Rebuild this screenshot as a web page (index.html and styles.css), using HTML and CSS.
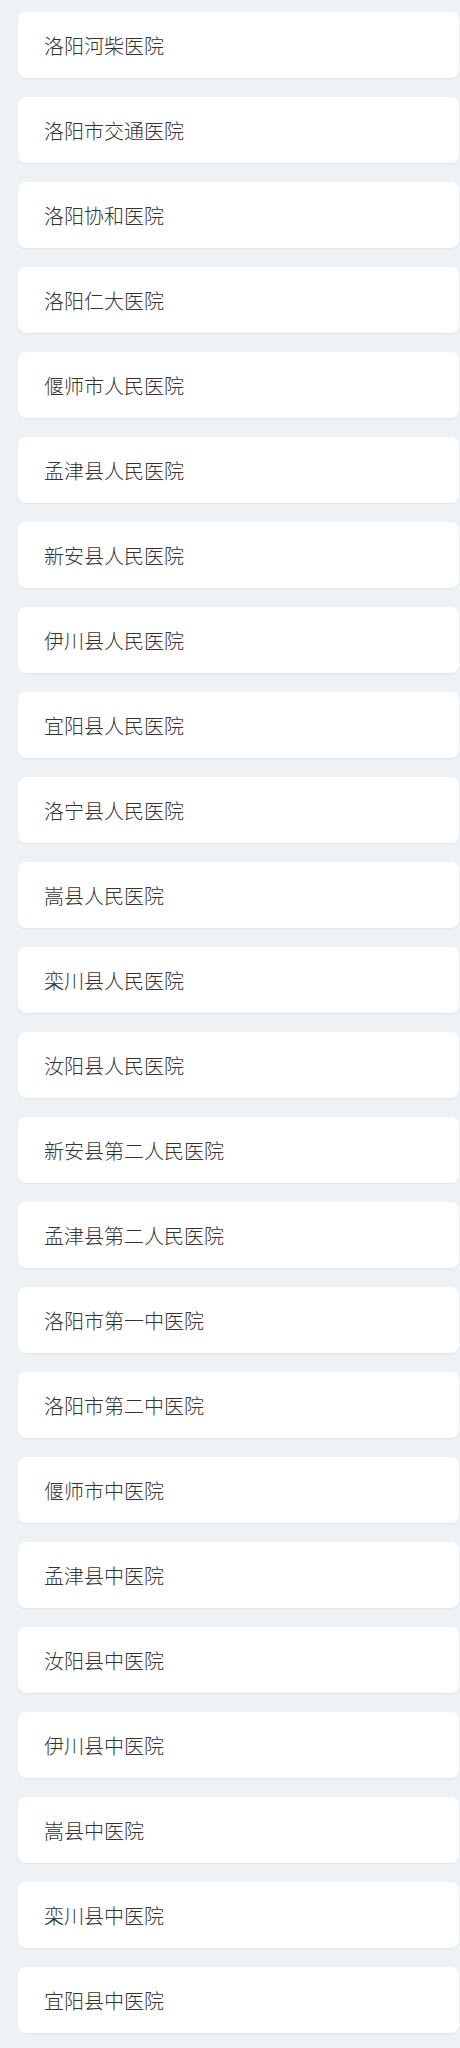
FILE: index.html
```html
<!DOCTYPE html>
<html lang="zh">
<head>
<meta charset="utf-8">
<link rel="stylesheet" href="styles.css">
</head>
<body>
<ul class="list">
<li class="card">洛阳河柴医院</li>
<li class="card">洛阳市交通医院</li>
<li class="card">洛阳协和医院</li>
<li class="card">洛阳仁大医院</li>
<li class="card">偃师市人民医院</li>
<li class="card">孟津县人民医院</li>
<li class="card">新安县人民医院</li>
<li class="card">伊川县人民医院</li>
<li class="card">宜阳县人民医院</li>
<li class="card">洛宁县人民医院</li>
<li class="card">嵩县人民医院</li>
<li class="card">栾川县人民医院</li>
<li class="card">汝阳县人民医院</li>
<li class="card">新安县第二人民医院</li>
<li class="card">孟津县第二人民医院</li>
<li class="card">洛阳市第一中医院</li>
<li class="card">洛阳市第二中医院</li>
<li class="card">偃师市中医院</li>
<li class="card">孟津县中医院</li>
<li class="card">汝阳县中医院</li>
<li class="card">伊川县中医院</li>
<li class="card">嵩县中医院</li>
<li class="card">栾川县中医院</li>
<li class="card">宜阳县中医院</li>
</ul>
</body>
</html>
```
FILE: styles.css
```css
html, body {
  margin: 0;
  padding: 0;
  background: #eef2f5;
}
body {
  font-family: "Noto Sans CJK SC", "Noto Sans", sans-serif;
}
.list {
  list-style: none;
  margin: 0;
  padding: 12px 1px 12px 18px;
  display: flex;
  flex-direction: column;
  gap: 19px;
}
.card {
  height: 66px;
  box-sizing: border-box;
  background: #ffffff;
  border-radius: 8px;
  box-shadow: 0 1px 2px rgba(0, 0, 0, 0.06);
  display: flex;
  align-items: center;
  padding-left: 26px;
  font-size: 20px;
  font-weight: 300;
  color: #333333;
}
```
